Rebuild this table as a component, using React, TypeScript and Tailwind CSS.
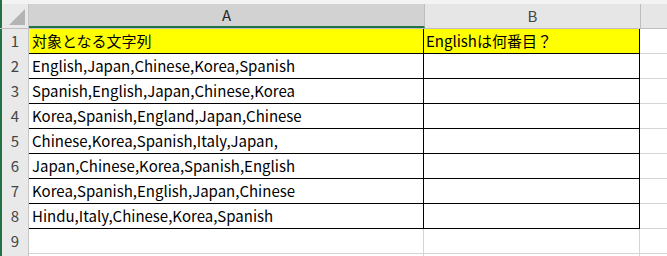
const ROWS: [string, string][] = [
  ["対象となる文字列", "Englishは何番目？"],
  ["English,Japan,Chinese,Korea,Spanish", ""],
  ["Spanish,English,Japan,Chinese,Korea", ""],
  ["Korea,Spanish,England,Japan,Chinese", ""],
  ["Chinese,Korea,Spanish,Italy,Japan,", ""],
  ["Japan,Chinese,Korea,Spanish,English", ""],
  ["Korea,Spanish,English,Japan,Chinese", ""],
  ["Hindu,Italy,Chinese,Korea,Spanish", ""],
];

const font = {
  fontFamily: '"Noto Sans CJK JP", "Noto Sans", sans-serif',
};

function RowHead({ n }: { n?: number }) {
  return (
    <div className="w-[29px] shrink-0 h-full flex items-center justify-center border-l-2 border-l-[#217346] border-r border-r-[#c6c6c6] bg-[#e9e9e9] text-[15px] text-[#444]">
      {n}
    </div>
  );
}

export default function App() {
  return (
    <div className="w-[667px] h-[256px] overflow-hidden bg-white" style={font}>
      <div className="h-[4px] border-l-2 border-l-[#217346] bg-[#f3f3f3]" />
      {/* column headers */}
      <div className="flex h-[25px] border-b border-[#bfbfbf]">
        <div className="w-[29px] shrink-0 relative border-l-2 border-l-[#217346] border-r border-r-[#c6c6c6] bg-[#e9e9e9]">
          <div className="absolute right-[3px] bottom-[3px] w-0 h-0 border-l-[16px] border-l-transparent border-b-[16px] border-b-[#b4b4b4]" />
        </div>
        <div className="w-[396px] shrink-0 flex items-center justify-center border-r border-r-[#bdbdbd] border-b-2 border-b-[#217346] bg-[#d2d2d2] text-[15px] text-[#262626]">
          A
        </div>
        <div className="w-[216px] shrink-0 flex items-center justify-center border-r border-r-[#bdbdbd] bg-[#e6e6e6] text-[15px] text-[#444]">
          B
        </div>
        <div className="flex-1 bg-[#e6e6e6]" />
      </div>
      {ROWS.map((r, i) => (
        <div key={i} className="flex h-[25px]">
          <RowHead n={i + 1} />
          <div
            className={`w-[395px] shrink-0 border-r border-b border-black pl-[3px] flex items-center text-[15px] text-black whitespace-nowrap ${
              i === 0 ? "bg-[#ffff00]" : "bg-white"
            }`}
          >
            {r[0]}
          </div>
          <div
            className={`w-[216px] shrink-0 border-r border-b border-black pl-[2px] flex items-center text-[15px] text-black whitespace-nowrap ${
              i === 0 ? "bg-[#ffff00]" : "bg-white"
            }`}
          >
            {r[1]}
          </div>
          <div className="flex-1 border-b border-[#d4d4d4]" />
        </div>
      ))}
      <div className="flex h-[25px]">
        <RowHead n={9} />
        <div className="w-[395px] shrink-0 border-r border-b border-[#d4d4d4]" />
        <div className="w-[216px] shrink-0 border-r border-b border-[#d4d4d4]" />
        <div className="flex-1 border-b border-[#d4d4d4]" />
      </div>
      <div className="flex h-[25px]">
        <RowHead />
        <div className="w-[395px] shrink-0 border-r border-[#d4d4d4]" />
        <div className="w-[216px] shrink-0 border-r border-[#d4d4d4]" />
      </div>
    </div>
  );
}
